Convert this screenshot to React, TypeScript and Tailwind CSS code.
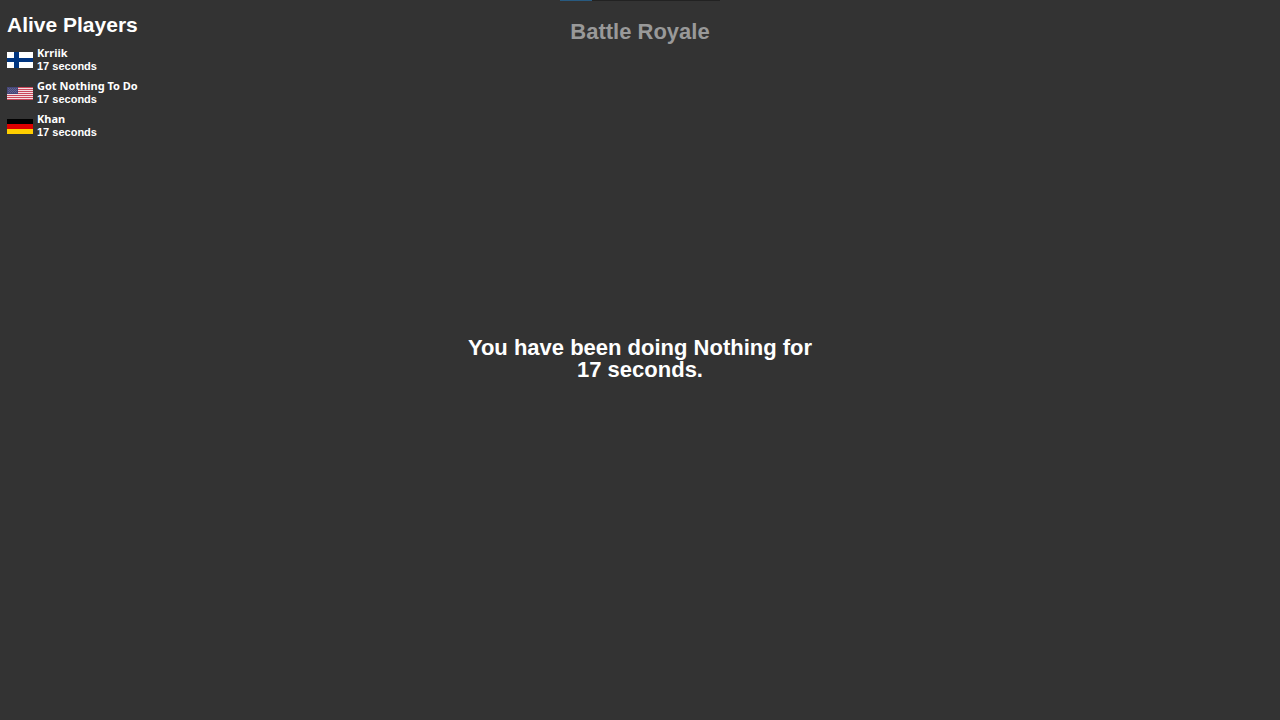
type Country = "fi" | "us" | "de";

type Player = {
  name: string;
  country: Country;
  seconds: number;
};

const players: Player[] = [
  { name: "Krriik", country: "fi", seconds: 17 },
  { name: "Got Nothing To Do", country: "us", seconds: 17 },
  { name: "Khan", country: "de", seconds: 17 },
];

function Flag({ country }: { country: Country }) {
  if (country === "fi") {
    return (
      <svg viewBox="0 0 26 16" className="w-[26px]" role="img" aria-label="Finland">
        <path fill="#ffffff" d="M0 0h26v16H0z" />
        <path fill="#003580" d="M7 0h5v16H7zM0 6h26v4H0z" />
      </svg>
    );
  }

  if (country === "us") {
    return (
      <svg viewBox="0 -1 26 14" className="w-[26px]" role="img" aria-label="United States">
        <path fill="#f4dfe2" d="M0 0h26v13H0z" />
        <path
          fill="#c9485b"
          d="M0 0h26v1H0zM0 2h26v1H0zM0 4h26v1H0zM0 6h26v1H0zM0 8h26v1H0zM0 10h26v1H0zM0 12h26v1H0z"
        />
        <path fill="#464779" d="M0 0h11v7H0z" />
        <path
          stroke="#a9aac8"
          strokeWidth=".5"
          strokeDasharray=".6 1.4"
          d="M1 1.5h9M2 2.5h8M1 3.5h9M2 4.5h8M1 5.5h9"
        />
      </svg>
    );
  }

  return (
    <svg viewBox="0 0 26 16" className="w-[26px]" role="img" aria-label="Germany">
      <path fill="#000000" d="M0 1h26v5H0z" />
      <path fill="#dd0000" d="M0 6h26v5H0z" />
      <path fill="#ffce00" d="M0 11h26v5H0z" />
    </svg>
  );
}

function PlayerRow({ player }: { player: Player }) {
  return (
    <li className="flex items-center gap-1">
      <Flag country={player.country} />
      <div className="text-[11px] font-bold">
        <p className="mb-0.5 font-['Noto_Sans',sans-serif] leading-[11px]">{player.name}</p>
        <p className="leading-[13px]">{player.seconds} seconds</p>
      </div>
    </li>
  );
}

function RoundProgress({ percent }: { percent: number }) {
  return (
    <div
      role="progressbar"
      aria-label="Round progress"
      aria-valuenow={percent}
      className="h-px w-40 bg-[#222222]"
    >
      <div className="h-full bg-[#285a80]" style={{ width: `${percent}%` }} />
    </div>
  );
}

export default function App() {
  const seconds = 17;

  return (
    <div className="grid min-h-screen grid-cols-[1fr_auto_1fr] bg-[#333333] font-['Liberation_Sans',Arial,sans-serif] font-bold text-white">
      <aside className="px-[7px] pt-[13px]">
        <h2 className="text-[21px] leading-6">Alive Players</h2>
        <ul className="mt-[10px] flex flex-col gap-[7px]">
          {players.map((player) => (
            <PlayerRow key={player.name} player={player} />
          ))}
        </ul>
      </aside>

      <main className="grid grid-rows-[1fr_auto_1fr] justify-items-center text-center text-[22px]">
        <header className="flex flex-col items-center">
          <RoundProgress percent={20} />
          <h1 className="mt-[19px] leading-6 text-[#999999]">Battle Royale</h1>
        </header>
        <p className="pb-[3px] leading-[22px]">
          You have been doing Nothing for
          <br />
          {seconds} seconds.
        </p>
      </main>
    </div>
  );
}
